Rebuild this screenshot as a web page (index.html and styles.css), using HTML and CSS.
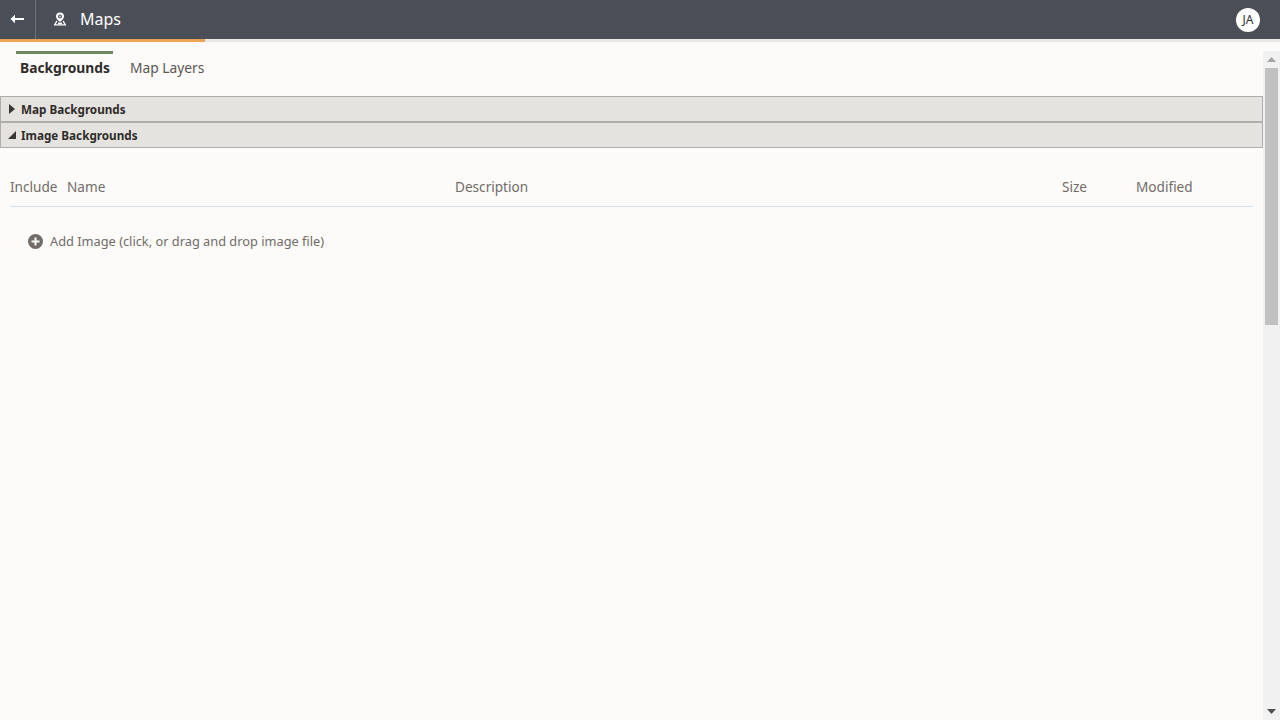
FILE: index.html
```html
<!DOCTYPE html>
<html lang="en">
<head>
<meta charset="utf-8">
<title>Maps</title>
<link rel="stylesheet" href="styles.css">
</head>
<body>
<header class="topbar">
  <button class="back" aria-label="Back">
    <svg width="14" height="10" viewBox="0 0 14 10"><path d="M0.5 5L5 0.8V4H14V6H5V9.2Z" fill="#fff"/></svg>
  </button>
  <div class="title">
    <svg class="mapicon" width="14" height="14" viewBox="0 0 14 14"><path d="M7 0.4A4 4 0 0 0 3 4.4C3 6.4 4.6 7.4 6.2 9.4H7.8C9.4 7.4 11 6.4 11 4.4A4 4 0 0 0 7 0.4Z" fill="#fff"/><circle cx="7" cy="4.4" r="2" fill="#4a4e57"/><circle cx="7" cy="4.4" r="1" fill="#c9cbd0"/><path d="M3.4 8.4L0.6 13.6H13.4L10.6 8.4L9.6 9.4L11.2 12.2H2.8L4.4 9.4Z" fill="#fff"/><path d="M5 10.6H9V12.2H5Z" fill="#fff"/></svg>
    <span>Maps</span>
  </div>
  <div class="avatar">JA</div>
</header>
<div class="progress"><div class="progress-fill"></div></div>
<div class="body">
  <main class="content">
    <nav class="tabs">
      <div class="tab active">Backgrounds</div>
      <div class="tab">Map Layers</div>
    </nav>
    <section class="accordion">
      <div class="acc-head"><svg class="caret" width="6" height="10" viewBox="0 0 6 10"><path d="M0 0L6 5L0 10Z"/></svg><span>Map Backgrounds</span></div>
      <div class="acc-head"><svg class="caret open" width="8" height="8" viewBox="0 0 8 8"><path d="M8 0V8H0Z"/></svg><span>Image Backgrounds</span></div>
    </section>
    <div class="table-head">
      <div class="c-include">Include</div>
      <div class="c-name">Name</div>
      <div class="c-desc">Description</div>
      <div class="c-size">Size</div>
      <div class="c-mod">Modified</div>
    </div>
    <div class="add">
      <svg width="15" height="15" viewBox="0 0 15 15"><circle cx="7.5" cy="7.5" r="7.5" fill="#716c68"/><path d="M6.5 3.5H8.5V6.5H11.5V8.5H8.5V11.5H6.5V8.5H3.5V6.5H6.5Z" fill="#fcfbf9"/></svg>
      <span>Add Image (click, or drag and drop image file)</span>
    </div>
  </main>
  <aside class="scrollbar">
    <div class="arrow"><svg width="9" height="5" viewBox="0 0 9 5"><path d="M4.5 0L9 5H0Z" fill="#a3a3a3"/></svg></div>
    <div class="thumb"></div>
    <div class="rest"></div>
    <div class="arrow"><svg width="9" height="5" viewBox="0 0 9 5"><path d="M0 0H9L4.5 5Z" fill="#505050"/></svg></div>
  </aside>
</div>
</body>
</html>
```
FILE: styles.css
```css
* { box-sizing: border-box; }
html, body { margin: 0; height: 100%; overflow: hidden; }
body {
  width: 1280px; height: 720px;
  display: flex; flex-direction: column;
  background: #fcfbf9;
  font-family: "Noto Sans", "Open Sans", sans-serif;
}
.topbar {
  height: 39px; flex: none;
  display: flex; align-items: center;
  background: #4a4e57; color: #fff;
}
.back {
  width: 36px; height: 39px; padding: 0 2px 1px 0;
  display: flex; align-items: center; justify-content: center;
  background: none; border: 0; border-right: 1px solid #6e7178;
}
.title { display: flex; align-items: center; gap: 13px; margin-left: 17px; font-size: 16px; line-height: 38px; }
.title span { margin-top: -1px; }
.mapicon { margin-top: -1px; }
.avatar {
  width: 24px; height: 24px; border-radius: 50%;
  margin-left: auto; margin-right: 20px;
  display: flex; align-items: center; justify-content: center;
  background: #fff; color: #2f2c2a; font-size: 12px;
}
.progress { height: 3px; flex: none; background: #e9e8e6; }
.progress-fill { width: 205px; height: 3px; background: #eba354; }
.body { flex: 1; min-height: 0; display: flex; padding-top: 9px; }
.content { flex: 1; min-width: 0; }
.tabs { display: flex; height: 45px; padding-left: 16px; gap: 13px; }
.tab {
  padding: 3px 0 0 4px;
  border-top: 3px solid transparent;
  font-size: 13.8px; line-height: 22px; color: #5a5653;
}
.tab.active { border-top-color: #6f8a62; color: #2f2c2a; font-weight: 700; font-size: 13.8px; width: 97px; }
.accordion { display: flex; flex-direction: column; }
.acc-head {
  height: 26px;
  display: flex; align-items: center;
  background: #e5e3df;
  border: 1px solid #b0aeaa;
  font-size: 11.7px; font-weight: 700; color: #2f2c2a;
}
.caret { fill: #3a3835; margin-left: 8px; margin-right: 6px; }
.caret.open { margin-left: 7px; margin-right: 5px; }
.table-head {
  height: 40px; margin: 19px 10px 0;
  display: flex; align-items: center;
  border-bottom: 1px solid #d6e0ee;
  font-size: 13.6px; color: #716c68;
}
.c-include { width: 57px; }
.c-name { width: 388px; }
.c-desc { width: 607px; }
.c-size { width: 74px; }
.add {
  display: flex; align-items: center; gap: 7px;
  margin: 25px 0 0 28px;
  font-size: 12.8px; color: #716c68;
}
.scrollbar { width: 17px; flex: none; display: flex; flex-direction: column; background: #f1f1f1; }
.arrow { height: 17px; display: flex; align-items: center; justify-content: center; flex: none; }
.thumb { height: 257px; margin: 0 2px; background: #c1c1c1; flex: none; }
.rest { flex: 1; }
```
